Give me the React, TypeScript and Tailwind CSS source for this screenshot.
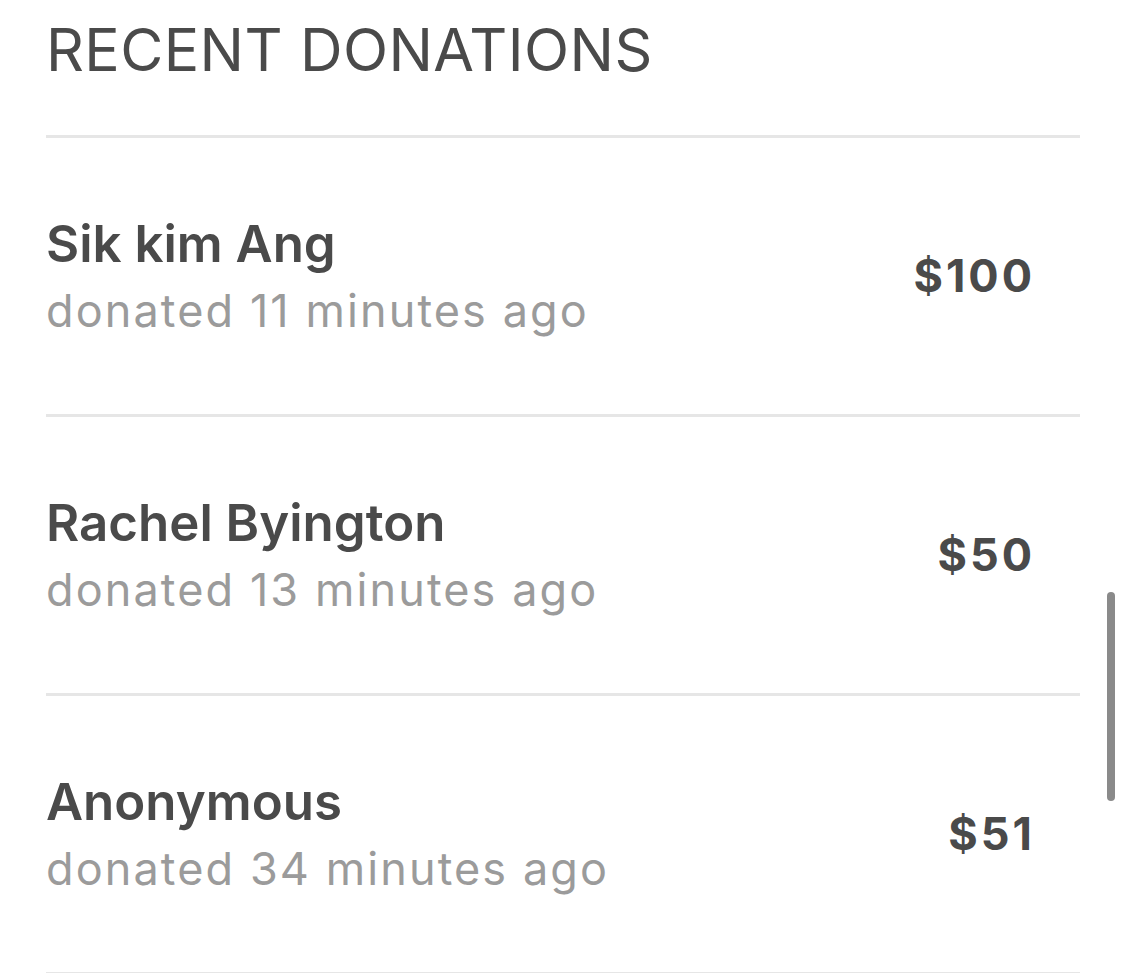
const donations = [
  { name: "Sik kim Ang", time: "donated 11 minutes ago", amount: "$100" },
  { name: "Rachel Byington", time: "donated 13 minutes ago", amount: "$50" },
  { name: "Anonymous", time: "donated 34 minutes ago", amount: "$51" },
];

const App = () => {
  return (
    <div className="relative h-[973px] w-[1125px] overflow-hidden bg-white font-['Inter',sans-serif]">
      <div className="ml-[46px] w-[1034px]">
        <div className="h-[138px] border-b-[3px] border-[#e6e6e6] pt-[14px]">
          <h2 className="text-[59px] leading-[72px] tracking-[0.4px] text-[#4a4a4a]">RECENT DONATIONS</h2>
        </div>
        {donations.map((d) => (
          <div
            key={d.name}
            className="flex h-[279px] items-center justify-between border-b-[3px] border-[#e6e6e6] pr-[45px]"
          >
            <div className="flex flex-col pt-[2px]">
              <span className="text-[51px] font-semibold leading-[60px] text-[#4a4a4a]">{d.name}</span>
              <span className="mt-[7px] text-[45px] leading-[60px] tracking-[2.1px] text-[#9b9b9b]">{d.time}</span>
            </div>
            <span className="text-[45px] font-bold tracking-[3px] text-[#4a4a4a]">{d.amount}</span>
          </div>
        ))}
      </div>
      <div className="absolute left-[1107px] top-[592px] h-[209px] w-[8px] rounded-full bg-[#8a8a8a]" />
    </div>
  );
};

export default App;
